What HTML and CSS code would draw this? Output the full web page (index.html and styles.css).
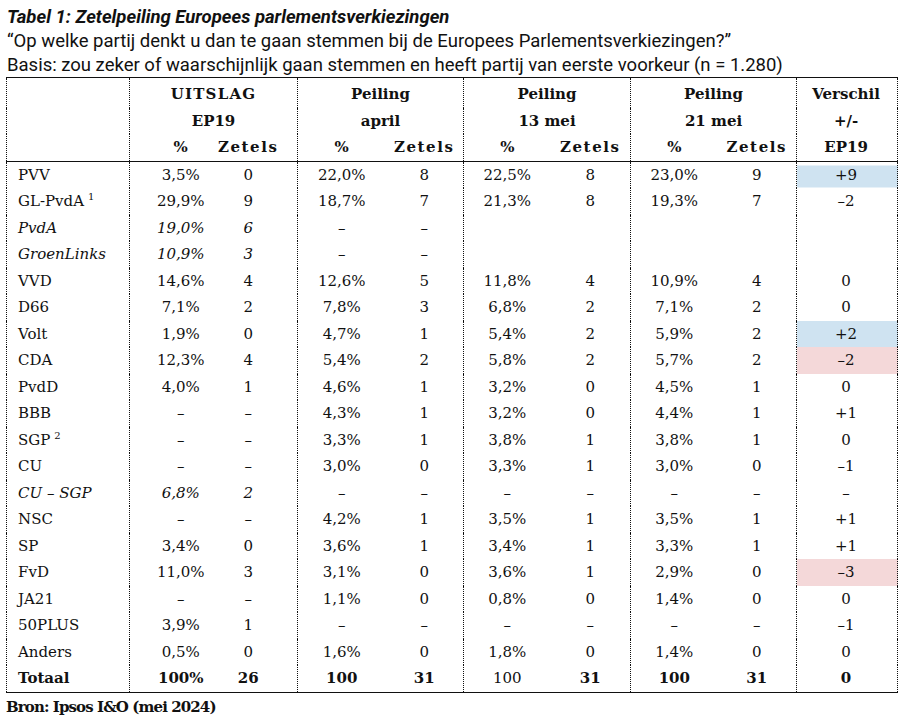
FILE: index.html
```html
<!DOCTYPE html>
<html lang="nl">
<head>
<meta charset="utf-8">
<title>Tabel 1</title>
<link rel="stylesheet" href="styles.css">
</head>
<body>
<div class="page">
  <div class="intro">
    <div class="title">Tabel 1: Zetelpeiling Europees parlementsverkiezingen</div>
    <div class="line">“Op welke partij denkt u dan te gaan stemmen bij de Europees Parlementsverkiezingen?”</div>
    <div class="line">Basis: zou zeker of waarschijnlijk gaan stemmen en heeft partij van eerste voorkeur (n = 1.280)</div>
  </div>
  <table class="poll">
    <colgroup>
      <col class="c-party">
      <col class="c-a1"><col class="c-b1">
      <col class="c-a2"><col class="c-b2">
      <col class="c-a3"><col class="c-b3">
      <col class="c-a4"><col class="c-b4">
      <col class="c-diff">
    </colgroup>
    <thead>
      <tr class="h1">
        <th class="party" rowspan="3"></th>
        <th class="grp wide" colspan="2">UITSLAG</th>
        <th class="grp" colspan="2">Peiling</th>
        <th class="grp" colspan="2">Peiling</th>
        <th class="grp" colspan="2">Peiling</th>
        <th class="diff">Verschil</th>
      </tr>
      <tr class="h2">
        <th class="grp" colspan="2">EP19</th>
        <th class="grp" colspan="2">april</th>
        <th class="grp" colspan="2">13 mei</th>
        <th class="grp" colspan="2">21 mei</th>
        <th class="diff">+/-</th>
      </tr>
      <tr class="h3">
        <th class="pct u">%</th><th class="zet u">Zetels</th>
        <th class="pct">%</th><th class="zet">Zetels</th>
        <th class="pct">%</th><th class="zet">Zetels</th>
        <th class="pct">%</th><th class="zet">Zetels</th>
        <th class="diff">EP19</th>
      </tr>
    </thead>
    <tbody>
      <tr><td class="party">PVV</td><td class="pct u">3,5%</td><td class="zet u">0</td><td class="pct">22,0%</td><td class="zet">8</td><td class="pct">22,5%</td><td class="zet">8</td><td class="pct">23,0%</td><td class="zet">9</td><td class="diff up first">+9</td></tr>
      <tr><td class="party">GL-PvdA<sup>1</sup></td><td class="pct u">29,9%</td><td class="zet u">9</td><td class="pct">18,7%</td><td class="zet">7</td><td class="pct">21,3%</td><td class="zet">8</td><td class="pct">19,3%</td><td class="zet">7</td><td class="diff">–2</td></tr>
      <tr class="sub"><td class="party">PvdA</td><td class="pct u">19,0%</td><td class="zet u">6</td><td class="pct">–</td><td class="zet">–</td><td class="pct"></td><td class="zet"></td><td class="pct"></td><td class="zet"></td><td class="diff"></td></tr>
      <tr class="sub"><td class="party">GroenLinks</td><td class="pct u">10,9%</td><td class="zet u">3</td><td class="pct">–</td><td class="zet">–</td><td class="pct"></td><td class="zet"></td><td class="pct"></td><td class="zet"></td><td class="diff"></td></tr>
      <tr><td class="party">VVD</td><td class="pct u">14,6%</td><td class="zet u">4</td><td class="pct">12,6%</td><td class="zet">5</td><td class="pct">11,8%</td><td class="zet">4</td><td class="pct">10,9%</td><td class="zet">4</td><td class="diff">0</td></tr>
      <tr><td class="party">D66</td><td class="pct u">7,1%</td><td class="zet u">2</td><td class="pct">7,8%</td><td class="zet">3</td><td class="pct">6,8%</td><td class="zet">2</td><td class="pct">7,1%</td><td class="zet">2</td><td class="diff">0</td></tr>
      <tr><td class="party">Volt</td><td class="pct u">1,9%</td><td class="zet u">0</td><td class="pct">4,7%</td><td class="zet">1</td><td class="pct">5,4%</td><td class="zet">2</td><td class="pct">5,9%</td><td class="zet">2</td><td class="diff up">+2</td></tr>
      <tr><td class="party">CDA</td><td class="pct u">12,3%</td><td class="zet u">4</td><td class="pct">5,4%</td><td class="zet">2</td><td class="pct">5,8%</td><td class="zet">2</td><td class="pct">5,7%</td><td class="zet">2</td><td class="diff down">–2</td></tr>
      <tr><td class="party">PvdD</td><td class="pct u">4,0%</td><td class="zet u">1</td><td class="pct">4,6%</td><td class="zet">1</td><td class="pct">3,2%</td><td class="zet">0</td><td class="pct">4,5%</td><td class="zet">1</td><td class="diff">0</td></tr>
      <tr><td class="party">BBB</td><td class="pct u">–</td><td class="zet u">–</td><td class="pct">4,3%</td><td class="zet">1</td><td class="pct">3,2%</td><td class="zet">0</td><td class="pct">4,4%</td><td class="zet">1</td><td class="diff">+1</td></tr>
      <tr><td class="party">SGP<sup>2</sup></td><td class="pct u">–</td><td class="zet u">–</td><td class="pct">3,3%</td><td class="zet">1</td><td class="pct">3,8%</td><td class="zet">1</td><td class="pct">3,8%</td><td class="zet">1</td><td class="diff">0</td></tr>
      <tr><td class="party">CU</td><td class="pct u">–</td><td class="zet u">–</td><td class="pct">3,0%</td><td class="zet">0</td><td class="pct">3,3%</td><td class="zet">1</td><td class="pct">3,0%</td><td class="zet">0</td><td class="diff">–1</td></tr>
      <tr class="sub"><td class="party">CU – SGP</td><td class="pct u">6,8%</td><td class="zet u">2</td><td class="pct">–</td><td class="zet">–</td><td class="pct">–</td><td class="zet">–</td><td class="pct">–</td><td class="zet">–</td><td class="diff">–</td></tr>
      <tr><td class="party">NSC</td><td class="pct u">–</td><td class="zet u">–</td><td class="pct">4,2%</td><td class="zet">1</td><td class="pct">3,5%</td><td class="zet">1</td><td class="pct">3,5%</td><td class="zet">1</td><td class="diff">+1</td></tr>
      <tr><td class="party">SP</td><td class="pct u">3,4%</td><td class="zet u">0</td><td class="pct">3,6%</td><td class="zet">1</td><td class="pct">3,4%</td><td class="zet">1</td><td class="pct">3,3%</td><td class="zet">1</td><td class="diff">+1</td></tr>
      <tr><td class="party">FvD</td><td class="pct u">11,0%</td><td class="zet u">3</td><td class="pct">3,1%</td><td class="zet">0</td><td class="pct">3,6%</td><td class="zet">1</td><td class="pct">2,9%</td><td class="zet">0</td><td class="diff down">–3</td></tr>
      <tr><td class="party">JA21</td><td class="pct u">–</td><td class="zet u">–</td><td class="pct">1,1%</td><td class="zet">0</td><td class="pct">0,8%</td><td class="zet">0</td><td class="pct">1,4%</td><td class="zet">0</td><td class="diff">0</td></tr>
      <tr><td class="party">50PLUS</td><td class="pct u">3,9%</td><td class="zet u">1</td><td class="pct">–</td><td class="zet">–</td><td class="pct">–</td><td class="zet">–</td><td class="pct">–</td><td class="zet">–</td><td class="diff">–1</td></tr>
      <tr><td class="party">Anders</td><td class="pct u">0,5%</td><td class="zet u">0</td><td class="pct">1,6%</td><td class="zet">0</td><td class="pct">1,8%</td><td class="zet">0</td><td class="pct">1,4%</td><td class="zet">0</td><td class="diff">0</td></tr>
      <tr class="total"><td class="party">Totaal</td><td class="pct u">100%</td><td class="zet u">26</td><td class="pct">100</td><td class="zet">31</td><td class="pct light">100</td><td class="zet">31</td><td class="pct">100</td><td class="zet">31</td><td class="diff">0</td></tr>
    </tbody>
  </table>
  <div class="source">Bron: Ipsos I&amp;O (mei 2024)</div>
</div>
</body>
</html>
```

FILE: styles.css
```css
html, body {
  margin: 0;
  padding: 0;
  background: #ffffff;
}

.page {
  padding: 5px 0 0 6px;
  color: #111111;
}

.intro {
  font-family: Roboto, "Liberation Sans", sans-serif;
  font-size: 18.5px;
  line-height: 24px;
  padding-left: 1px;
}

.title {
  font-weight: 700;
  font-style: italic;
}

.poll {
  border-collapse: collapse;
  table-layout: fixed;
  width: 891px;
  font-family: "DejaVu Serif", "Liberation Serif", serif;
  font-size: 15px;
  border-top: 1px solid #111111;
  border-bottom: 1px solid #111111;
  border-left: 1px dotted #111111;
  border-right: 1px dotted #111111;
}

.c-party { width: 123px; }
.c-a1 { width: 86px; }
.c-b1 { width: 82px; }
.c-a2 { width: 88px; }
.c-b2 { width: 78px; }
.c-a3 { width: 87px; }
.c-b3 { width: 80px; }
.c-a4 { width: 87px; }
.c-b4 { width: 79px; }
.c-diff { width: 101px; }

.poll th,
.poll td {
  padding: 0;
  height: 26.5px;
  line-height: 20px;
  text-align: center;
  white-space: nowrap;
  vertical-align: middle;
}

.poll th {
  font-weight: 700;
}

.poll th.zet {
  letter-spacing: 1.6px;
}

.poll th.wide {
  letter-spacing: 1.2px;
}

.poll thead tr.h1 th {
  padding-top: 3px;
}

.poll thead tr.h3 th {
  border-bottom: 1px solid #111111;
}

.poll th.party,
.poll td.party {
  text-align: left;
  padding-left: 11px;
  border-right: 1px dotted #111111;
}

.poll thead th.party {
  border-bottom: 1px solid #111111;
}

.poll .grp,
.poll .zet {
  border-right: 1px dotted #111111;
}

.poll .pct.u {
  padding-left: 16px;
}

.poll .zet.u {
  padding-right: 16px;
}

.poll .diff {
  padding-right: 2px;
}

.poll sup {
  font-size: 10px;
  line-height: 0;
  vertical-align: 6px;
  margin-left: 4px;
}

.poll tr.sub td {
  font-style: italic;
}

.poll td.up {
  background: #cfe3f1;
}

.poll td.up.first {
  background: linear-gradient(#ffffff 0 4px, #cfe3f1 4px);
}

.poll td.down {
  background: #f4d8d9;
}

.poll tr.total td {
  font-weight: 700;
}

.poll tr.total td.light {
  font-weight: 400;
}

.source {
  font-family: "DejaVu Serif", "Liberation Serif", serif;
  font-weight: 700;
  font-size: 15px;
  letter-spacing: -0.9px;
  line-height: 20px;
  margin-top: 4px;
}
```
